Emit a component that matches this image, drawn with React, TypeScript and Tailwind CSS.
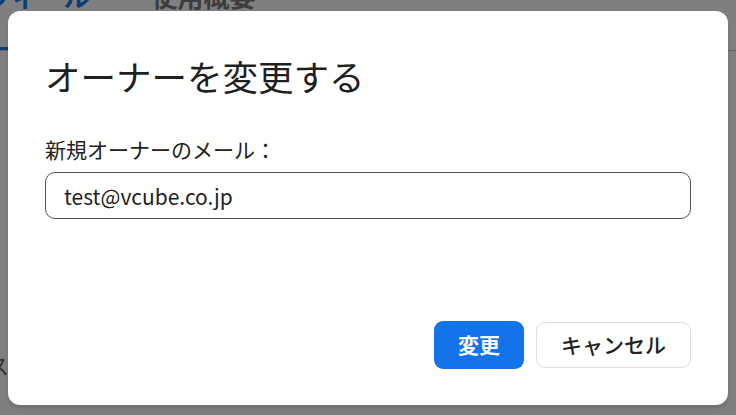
import React from "react";

export default function App() {
  const font = { fontFamily: '"Noto Sans CJK JP", "Noto Sans", sans-serif' };
  return (
    <div className="relative h-[415px] w-[736px] overflow-hidden bg-white" style={font}>
      {/* background page */}
      <div className="flex flex-col">
        <div className="flex h-[51px] items-start border-b border-[#c8c8c8]">
          <div className="-ml-[66px] flex h-[50px] flex-col justify-between">
            <span className="-mt-[17px] block text-[26px] leading-none font-bold text-[#1a78f0]">プロフィール</span>
            <span className="block h-[3px] w-full bg-[#1a78f0]" />
          </div>
          <div className="ml-[62px]">
            <span className="-mt-[17px] block text-[26px] leading-none font-bold text-[#7a7a7a]">使用概要</span>
          </div>
        </div>
        <div className="mt-[302px] -ml-[13px] text-[22px] leading-none text-[#666]">ス</div>
      </div>

      {/* overlay */}
      <div className="absolute inset-0 flex items-start justify-center bg-black/50 pt-[11px]">
        <div className="flex h-[394px] w-[720px] flex-col rounded-[12px] bg-white px-[37px] pt-[45px] pb-[36px] shadow-md">
          <h2 className="text-[35.5px] leading-[40px] font-normal text-[#1f1f1f]">オーナーを変更する</h2>
          <label className="mt-[39px] block text-[21px] leading-[28px] text-[#222]">新規オーナーのメール：</label>
          <input
            className="mt-[9px] h-[47px] w-full rounded-[10px] border border-[#4b5058] px-[18px] text-[21px] text-[#222] outline-none"
            style={font}
            defaultValue="test@vcube.co.jp"
          />
          <div className="flex-1" />
          <div className="flex items-center justify-end gap-[12px]">
            <button className="flex h-[48px] w-[90px] items-center justify-center rounded-[9px] bg-[#1273eb] text-[21px] font-bold text-white">
              変更
            </button>
            <button className="flex h-[46px] w-[155px] items-center justify-center rounded-[9px] border border-[#dcdfe5] bg-white text-[21px] font-medium text-[#222]">
              キャンセル
            </button>
          </div>
        </div>
      </div>
    </div>
  );
}
